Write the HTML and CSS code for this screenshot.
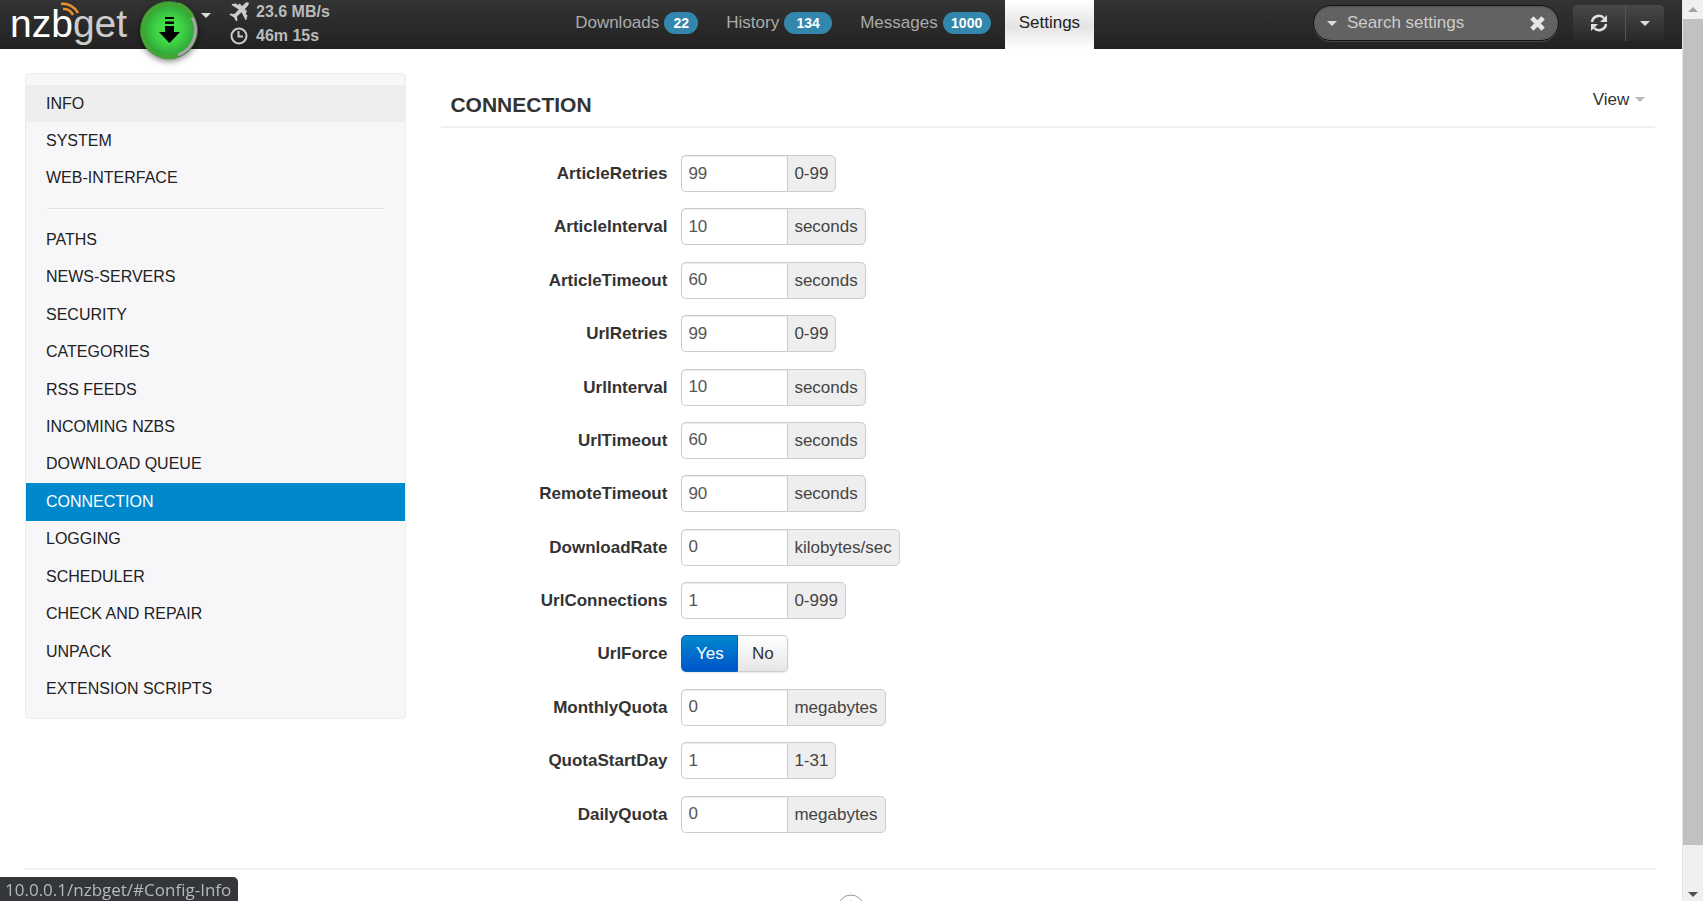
FILE: index.html
```html
<!DOCTYPE html>
<html lang="en">
<head>
<meta charset="utf-8">
<title>NZBGet - Settings</title>
<link rel="stylesheet" href="styles.css">
</head>
<body>
<div class="page">
  <header class="navbar">
    <div class="brand">
      <a class="logo" href="#"><span class="logo-bright">nzb</span><span class="logo-dim">get</span>
        <svg class="logo-waves" width="20" height="14" viewBox="0 0 20 14" fill="none" stroke="#e8912d" stroke-width="2.500"><path d="M1 2C8 1 15 5 18 11"/><path d="M3 7C7 6.500 11 9 13 13"/></svg>
      </a>
      <button class="play" type="button" aria-label="Pause downloads">
        <svg width="72" height="72" viewBox="0 0 72 72">
          <defs><radialGradient id="glow"><stop offset="0" stop-color="#45e84b"/><stop offset=".5" stop-color="#3fd445"/><stop offset="1" stop-color="#2fa53a"/></radialGradient></defs>
          <circle cx="36" cy="36" r="29" fill="#3d7d3a"/>
          <circle cx="36" cy="36" r="26" fill="url(#glow)"/>
          <path d="M59 23A26.500 26.500 0 0 1 45 61" fill="none" stroke="#a5a5a5" stroke-width="3"/>
          <path d="M57.500 21A26.500 26.500 0 1 0 45 61.500" fill="none" stroke="#43a532" stroke-width="4"/>
          <path d="M46 11.500A26.500 26.500 0 0 1 57.500 21" fill="none" stroke="#43a532" stroke-width="6" stroke-linecap="round"/>
          <path d="M32 23h9v2H32zM32 27.500h9v2.500H32zM32 32h9v6h6L36.500 49 26 38h6z" fill="#000"/>
        </svg>
      </button>
      <button class="speed-menu" type="button" aria-label="Speed limit"><span class="caret"></span></button>
      <div class="stats">
        <div class="stat"><svg width="20" height="20" viewBox="0 0 20 20" fill="#ccc"><path d="M19.500.500c-1.200-.700-2.700 0-3.700 1L13.500 3.700 11.800 3.300 11.500 2 10 1.700l-.500 1L7.500 2.300 7 1.200 5.700 1.500 5.400 2 3.500 1.700 2.500 3l7.200 4.500L5.500 12 1.500 11.500.500 12.700l4.300 2.500 2.500 4.300L8.500 18.500 8 14.500l4.500-4.200L16.500 18l1.500-1-.300-2 .800-.700-.200-1.300-1-.300-.400-2 1-.700-.300-1.500-1.200-.200-.300-1.500L18.500 4.200c1-1 1.700-2.700 1-3.700z"/></svg>23.6 MB/s</div>
        <div class="stat"><svg width="20" height="20" viewBox="0 0 20 20" fill="none" stroke="#ccc" stroke-width="2"><circle cx="10" cy="10" r="7.500"/><path d="M9.500 5v5.500H14"/></svg>46m 15s</div>
      </div>
    </div>
    <nav class="tabs">
      <a class="tab" href="#">Downloads <span class="badge">22</span></a>
      <a class="tab" href="#">History <span class="badge badge-wide">134</span></a>
      <a class="tab" href="#">Messages <span class="badge badge-wide">1000</span></a>
      <a class="tab tab-active" href="#">Settings</a>
    </nav>
    <div class="tools">
      <div class="search">
        <button class="bare" type="button" aria-label="Search options"><span class="caret"></span></button>
        <input class="search-input" type="text" placeholder="Search settings" aria-label="Search settings">
        <button class="bare" type="button" aria-label="Clear search"><svg width="15" height="15" viewBox="0 0 16 16" stroke="#e6e6e6" stroke-width="5"><path d="M2 2l12 12M14 2L2 14"/></svg></button>
      </div>
      <div class="refresh">
        <button class="dark-btn" type="button" aria-label="Refresh"><svg width="18" height="18" viewBox="0 0 18 18" fill="none" stroke="#e0e0e0" stroke-width="2.500"><path d="M2 8A7 7 0 0 1 14 4M16 10A7 7 0 0 1 4 14"/><path d="M17 1v7h-7zM1 17v-7h7z" fill="#e0e0e0" stroke="none"/></svg></button>
        <button class="dark-btn dark-btn-small" type="button" aria-label="Refresh interval"><span class="caret"></span></button>
      </div>
    </div>
  </header>
  <main class="content">
    <aside class="sidebar">
      <ul class="menu menu-top">
        <li><a class="hover" href="#">INFO</a></li>
        <li><a href="#">SYSTEM</a></li>
        <li><a href="#">WEB-INTERFACE</a></li>
      </ul>
      <hr class="divider">
      <ul class="menu menu-main">
        <li><a href="#">PATHS</a></li>
        <li><a href="#">NEWS-SERVERS</a></li>
        <li><a href="#">SECURITY</a></li>
        <li><a href="#">CATEGORIES</a></li>
        <li><a href="#">RSS FEEDS</a></li>
        <li><a href="#">INCOMING NZBS</a></li>
        <li><a href="#">DOWNLOAD QUEUE</a></li>
        <li><a class="active" href="#">CONNECTION</a></li>
        <li><a href="#">LOGGING</a></li>
        <li><a href="#">SCHEDULER</a></li>
        <li><a href="#">CHECK AND REPAIR</a></li>
        <li><a href="#">UNPACK</a></li>
        <li><a href="#">EXTENSION SCRIPTS</a></li>
      </ul>
    </aside>
    <section class="settings">
      <div class="section-head">
        <h1>CONNECTION</h1>
        <button class="view" type="button">View <span class="caret caret-gray"></span></button>
      </div>
      <form class="form">
        <div class="row"><label for="f1">ArticleRetries</label><div class="field"><input id="f1" type="text" value="99"><span class="unit">0-99</span></div></div>
        <div class="row"><label for="f2">ArticleInterval</label><div class="field"><input id="f2" type="text" value="10"><span class="unit">seconds</span></div></div>
        <div class="row"><label for="f3">ArticleTimeout</label><div class="field"><input id="f3" type="text" value="60"><span class="unit">seconds</span></div></div>
        <div class="row"><label for="f4">UrlRetries</label><div class="field"><input id="f4" type="text" value="99"><span class="unit">0-99</span></div></div>
        <div class="row"><label for="f5">UrlInterval</label><div class="field"><input id="f5" type="text" value="10"><span class="unit">seconds</span></div></div>
        <div class="row"><label for="f6">UrlTimeout</label><div class="field"><input id="f6" type="text" value="60"><span class="unit">seconds</span></div></div>
        <div class="row"><label for="f7">RemoteTimeout</label><div class="field"><input id="f7" type="text" value="90"><span class="unit">seconds</span></div></div>
        <div class="row"><label for="f8">DownloadRate</label><div class="field"><input id="f8" type="text" value="0"><span class="unit">kilobytes/sec</span></div></div>
        <div class="row"><label for="f9">UrlConnections</label><div class="field"><input id="f9" type="text" value="1"><span class="unit">0-999</span></div></div>
        <div class="row"><label for="f10">UrlForce</label><div class="field"><button id="f10" class="choice choice-on" type="button">Yes</button><button class="choice" type="button">No</button></div></div>
        <div class="row"><label for="f11">MonthlyQuota</label><div class="field"><input id="f11" type="text" value="0"><span class="unit">megabytes</span></div></div>
        <div class="row"><label for="f12">QuotaStartDay</label><div class="field"><input id="f12" type="text" value="1"><span class="unit">1-31</span></div></div>
        <div class="row"><label for="f13">DailyQuota</label><div class="field"><input id="f13" type="text" value="0"><span class="unit">megabytes</span></div></div>
      </form>
    </section>
  </main>
  <footer class="footer">
    <svg width="28" height="28" viewBox="0 0 28 28" fill="none" stroke="#999"><circle cx="14" cy="14" r="13"/><circle cx="14" cy="14" r="7" stroke="#ccc"/></svg>
  </footer>
</div>
<div class="scrollbar" aria-hidden="true">
  <span class="arrow arrow-up"></span>
  <span class="thumb"></span>
  <span class="arrow arrow-down"></span>
</div>
<div class="status">10.0.0.1/nzbget/#Config-Info</div>
</body>
</html>
```
FILE: styles.css
```css
* { box-sizing: border-box; }

body {
  margin: 0;
  height: 100vh;
  overflow: hidden;
  display: grid;
  grid-template-columns: minmax(0, 1fr) 21px;
  background: #fff;
  color: #333;
  font: 17px/22px "Liberation Sans", Arial, sans-serif;
}

button, input { font: inherit; color: inherit; }
button { border: 0; padding: 0; background: none; }
a { color: inherit; text-decoration: none; }

.page { height: 100vh; overflow: hidden; }

.caret {
  display: inline-block;
  border: 5px solid transparent;
  border-top-color: #ddd;
  border-bottom: 0;
}
.caret-gray { border-top-color: #b8b8b8; vertical-align: 3px; margin-left: 1px; }

/* Top bar */
.navbar {
  display: grid;
  grid-template-columns: 21fr auto 22fr;
  grid-template-rows: 49px;
  height: 49px;
  background: linear-gradient(#333, #222);
}
.brand { display: flex; align-items: flex-start; padding-left: 10px; }
.logo {
  position: relative;
  width: 123px;
  font-size: 39px;
  line-height: 47px;
  white-space: nowrap;
  color: #fff;
}
.logo-dim { color: #ccc; }
.logo-waves { position: absolute; left: 50px; top: 2px; }
.play { width: 72px; height: 72px; margin-top: -6px; border-radius: 50%; filter: drop-shadow(0 2px 3px rgba(0, 0, 0, .5)); z-index: 1; }
.play svg { display: block; }
.speed-menu { height: 26px; width: 10px; line-height: 10px; margin-right: 18px; margin-left: -4px; }
.stats { color: #bbb; font-weight: bold; font-size: 16px; line-height: 24px; }
.stat { display: flex; align-items: center; gap: 7px; }

.tabs { display: flex; }
.tab {
  display: flex;
  align-items: center;
  gap: 5px;
  padding: 0 14px 4px;
  color: #aaa;
}
.tab-active {
  color: #222;
  background: linear-gradient(#fff, #e4e4e4 55%, #fff);
}
.badge {
  min-width: 34px;
  padding: 0 7px;
  border-radius: 11px;
  background: #3387ad;
  color: #fff;
  font-size: 14px;
  font-weight: bold;
  text-align: center;
}
.badge-wide { min-width: 48px; }

.tools { display: flex; justify-content: flex-end; gap: 14px; padding: 5px 18px 0 0; }
.search {
  display: flex;
  align-items: center;
  gap: 10px;
  width: 246px;
  height: 36px;
  padding: 0 13px;
  border: 1px solid #111;
  border-radius: 18px;
  background: #626262;
  box-shadow: inset 0 1px 2px rgba(0, 0, 0, .2), 0 1px 0 #484848;
}
.bare { display: flex; }
.search-input { flex: 1; min-width: 0; padding: 0; border: 0; background: none; }
.search-input::placeholder { color: #ccc; opacity: 1; }
.refresh { display: flex; height: 36px; border-radius: 5px; box-shadow: inset 0 0 2px #555; overflow: hidden; }
.dark-btn {
  display: flex;
  align-items: center;
  justify-content: center;
  width: 52px;
  background: linear-gradient(#484848, #282828);
}
.dark-btn-small { width: 39px; border-left: 1px solid #555; }

/* Body */
.content {
  display: grid;
  grid-template-columns: 11fr 35fr;
  gap: 35px;
  align-items: start;
  margin: 0 27px 0 25px;
  padding-top: 24px;
}
.sidebar {
  padding: 11px 0 10px;
  border: 1px solid #ececec;
  border-radius: 4px;
  background: #f7f7f9;
  font-size: 16px;
}
.menu { display: grid; grid-auto-rows: 1fr; margin: 0; padding: 0; list-style: none; }
.menu-top { height: 112px; }
.menu-main { height: 487px; }
.menu a { display: flex; align-items: center; height: 100%; padding: 0 20px; color: #222; }
.menu .hover { background: #eee; }
.menu .active { background: #08c; color: #fff; }
.divider { height: 2px; margin: 11px 21px; border: 0; background: #fff; border-top: 1px solid #e2e2e2; }

.section-head {
  display: flex;
  justify-content: space-between;
  align-items: flex-start;
  height: 55px;
  padding: 16px 10px 0 9px;
  border-bottom: 2px solid #f1f1f1;
}
.section-head h1 { margin: 4px 0 0; font-size: 21px; line-height: 24px; }
.form { display: grid; grid-auto-rows: 1fr; height: 694px; margin-top: 27px; }
.row { display: grid; grid-template-columns: 226px 1fr; gap: 14px; align-items: start; }
.row label { text-align: right; font-weight: bold; line-height: 37px; }
.field { display: flex; height: 37px; }
.field input {
  width: 106px;
  padding: 0 6px;
  border: 1px solid #ccc;
  border-right: 0;
  border-radius: 5px 0 0 5px;
  color: #555;
  box-shadow: inset 0 1px 1px rgba(0, 0, 0, .08);
}
.unit {
  padding: 0 7px 0 6px;
  border: 1px solid #ccc;
  border-radius: 0 5px 5px 0;
  background: #eee;
  color: #444;
  line-height: 35px;
}
.choice {
  width: 50px;
  border: 1px solid #ccc;
  border-left: 0;
  border-radius: 0 5px 5px 0;
  background: linear-gradient(#fff, #e6e6e6);
  box-shadow: 0 1px 2px rgba(0, 0, 0, .1);
}
.choice-on {
  width: 57px;
  border: 1px solid #06b;
  border-radius: 5px 0 0 5px;
  background: linear-gradient(#08c, #05c);
  color: #fff;
}
.footer {
  display: flex;
  justify-content: center;
  margin: 19px 27px 0 25px;
  padding-top: 24px;
  padding-left: 22px;
  border-top: 2px solid #f1f1f1;
}

/* Window chrome */
.scrollbar { display: flex; flex-direction: column; height: 100vh; background: #f0f0f0; border-left: 1px solid #e4e4e4; }
.arrow { display: flex; justify-content: center; align-items: center; height: 19px; }
.arrow::before { content: ""; border: 5px solid transparent; }
.arrow-up::before { border-bottom-color: #a3a3a3; border-top: 0; }
.arrow-down::before { border-top-color: #505050; border-bottom: 0; }
.thumb { flex: 1; margin-bottom: 43px; background: #c1c1c1; }
.arrow-down { height: 13px; }
.status {
  position: fixed;
  left: 0;
  bottom: 0;
  height: 24px;
  padding: 2px 7px 0 5px;
  border-radius: 0 5px 0 0;
  background: #35363a;
  color: #b4b8bc;
  font: 17px/22px "Open Sans", "Noto Sans", sans-serif;
}
```
